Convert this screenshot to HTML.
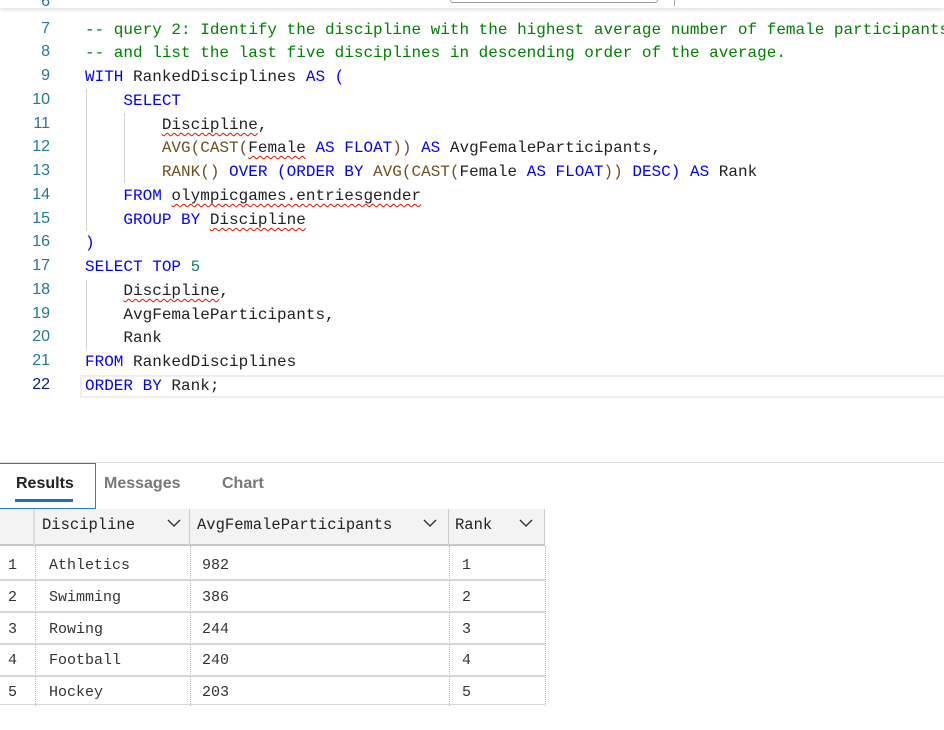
<!DOCTYPE html>
<html><head><meta charset="utf-8"><style>
*{margin:0;padding:0;box-sizing:border-box}
body{width:944px;height:730px;background:#fff;position:relative;overflow:hidden;font-family:"Liberation Mono",monospace}
.top{position:absolute;left:0;top:0;width:944px;height:8px;background:#fff;box-shadow:0 2px 4px rgba(0,0,0,.12)}
.ln{position:absolute;left:0;width:50px;text-align:right;font-size:16px;color:#237893;font-family:"Liberation Sans",sans-serif}
.cl{position:absolute;left:85px;font-size:16px;white-space:pre;color:#1f1f1f;line-height:20px}
.c{color:#008000}.k{color:#0000ff}.f{color:#6f4e1e}.n{color:#098658}
.sq{text-decoration:underline wavy #e51400;text-underline-offset:3px;text-decoration-thickness:1px}
.g{position:absolute;width:1px;background:#d4d4d4}
.tab{position:absolute;top:475px;font-family:"Liberation Sans",sans-serif;font-size:16px;font-weight:bold;color:#777}
.hdr{position:absolute;top:509px;height:37px;background:#f3f3f3;border-bottom:2px solid #c8c8c8;border-right:1px solid #ccc}
.ht{position:absolute;top:516px;font-size:15.5px;color:#222}
.chev{position:absolute;top:518px;width:16px;height:10px}
.cell{position:absolute;font-size:15px;color:#333}
.rl{position:absolute;left:0;width:545px;height:2px;background:#d6d6d6}
.vd{position:absolute;top:546px;height:160px;border-left:1px dotted #bbb}
</style></head><body>
<div class="top"></div>
<div style="position:absolute;left:450px;top:0;width:208px;height:3px;border:1px solid #999;border-top:none;border-radius:0 0 3px 3px"></div>
<div style="position:absolute;left:674px;top:0;width:1px;height:6px;background:#aaa"></div>
<div class="ln" style="top:-7px">6</div>
<div class="ln" style="top:20px">7</div>
<div class="ln" style="top:43px">8</div>
<div class="ln" style="top:67px">9</div>
<div class="ln" style="top:91px">10</div>
<div class="ln" style="top:115px">11</div>
<div class="ln" style="top:138px">12</div>
<div class="ln" style="top:162px">13</div>
<div class="ln" style="top:186px">14</div>
<div class="ln" style="top:210px">15</div>
<div class="ln" style="top:233px">16</div>
<div class="ln" style="top:257px">17</div>
<div class="ln" style="top:281px">18</div>
<div class="ln" style="top:305px">19</div>
<div class="ln" style="top:328px">20</div>
<div class="ln" style="top:352px">21</div>
<div class="ln" style="top:376px;color:#0b216f">22</div>
<div style="position:absolute;left:80px;top:375px;width:870px;height:23px;border:2px solid #eee"></div>
<div class="g" style="left:86px;top:89px;height:142px"></div>
<div class="g" style="left:124px;top:113px;height:70px"></div>
<div class="g" style="left:86px;top:280px;height:70px"></div>
<div class="cl" style="top:20px"><span class="c">-- query 2: Identify the discipline with the highest average number of female participants</span></div>
<div class="cl" style="top:43px"><span class="c">-- and list the last five disciplines in descending order of the average.</span></div>
<div class="cl" style="top:67px"><span class="k">WITH</span> RankedDisciplines <span class="k">AS (</span></div>
<div class="cl" style="top:91px">    <span class="k">SELECT</span></div>
<div class="cl" style="top:115px">        <span class="sq">Discipline</span>,</div>
<div class="cl" style="top:138px">        <span class="f">AVG(CAST(</span><span class="sq">Female</span> <span class="k">AS FLOAT</span><span class="f">))</span> <span class="k">AS</span> AvgFemaleParticipants,</div>
<div class="cl" style="top:162px">        <span class="f">RANK()</span> <span class="k">OVER</span> <span class="k">(ORDER BY</span> <span class="f">AVG(CAST(</span>Female <span class="k">AS FLOAT</span><span class="f">))</span> <span class="k">DESC)</span> <span class="k">AS</span> Rank</div>
<div class="cl" style="top:186px">    <span class="k">FROM</span> <span class="sq">olympicgames.entriesgender</span></div>
<div class="cl" style="top:210px">    <span class="k">GROUP BY</span> <span class="sq">Discipline</span></div>
<div class="cl" style="top:233px"><span class="k">)</span></div>
<div class="cl" style="top:257px"><span class="k">SELECT TOP</span> <span class="n">5</span></div>
<div class="cl" style="top:281px">    <span class="sq">Discipline</span>,</div>
<div class="cl" style="top:305px">    AvgFemaleParticipants,</div>
<div class="cl" style="top:328px">    Rank</div>
<div class="cl" style="top:352px"><span class="k">FROM</span> RankedDisciplines</div>
<div class="cl" style="top:376px"><span class="k">ORDER BY</span> Rank;</div>

<div style="position:absolute;left:0;top:462px;width:944px;height:1px;background:#ddd"></div>
<div style="position:absolute;left:-2px;top:463px;width:98px;height:46px;border:1px solid #2b7bd6"></div>
<div style="position:absolute;left:15px;top:499px;width:58px;height:3px;background:#1a6fc4"></div>
<div class="tab" style="left:16px;color:#222">Results</div>
<div class="tab" style="left:104px">Messages</div>
<div class="tab" style="left:222px">Chart</div>

<div class="hdr" style="left:0;width:35px;border-right:2px solid #ddd"></div>
<div class="hdr" style="left:35px;width:155px"></div>
<div class="hdr" style="left:190px;width:259px"></div>
<div class="hdr" style="left:449px;width:96px"></div>
<div class="ht" style="left:42px">Discipline</div>
<div class="ht" style="left:197px">AvgFemaleParticipants</div>
<div class="ht" style="left:455px">Rank</div>
<svg class="chev" style="left:166px" viewBox="0 0 16 10"><path d="M2 2l6 6 6-6" fill="none" stroke="#333" stroke-width="1.4"/></svg>
<svg class="chev" style="left:422px" viewBox="0 0 16 10"><path d="M2 2l6 6 6-6" fill="none" stroke="#333" stroke-width="1.4"/></svg>
<svg class="chev" style="left:518px" viewBox="0 0 16 10"><path d="M2 2l6 6 6-6" fill="none" stroke="#333" stroke-width="1.4"/></svg>

<div class="vd" style="left:35px"></div>
<div class="vd" style="left:190px"></div>
<div class="vd" style="left:449px"></div>
<div class="vd" style="left:545px"></div>
<div class="rl" style="top:579px"></div>
<div class="rl" style="top:611px"></div>
<div class="rl" style="top:643px"></div>
<div class="rl" style="top:675px"></div>
<div class="rl" style="top:704px;height:1px"></div>

<div class="cell" style="top:557px;left:8px">1</div><div class="cell" style="top:557px;left:49px">Athletics</div><div class="cell" style="top:557px;left:202px">982</div><div class="cell" style="top:557px;left:462px">1</div>
<div class="cell" style="top:589px;left:8px">2</div><div class="cell" style="top:589px;left:49px">Swimming</div><div class="cell" style="top:589px;left:202px">386</div><div class="cell" style="top:589px;left:462px">2</div>
<div class="cell" style="top:621px;left:8px">3</div><div class="cell" style="top:621px;left:49px">Rowing</div><div class="cell" style="top:621px;left:202px">244</div><div class="cell" style="top:621px;left:462px">3</div>
<div class="cell" style="top:652px;left:8px">4</div><div class="cell" style="top:652px;left:49px">Football</div><div class="cell" style="top:652px;left:202px">240</div><div class="cell" style="top:652px;left:462px">4</div>
<div class="cell" style="top:684px;left:8px">5</div><div class="cell" style="top:684px;left:49px">Hockey</div><div class="cell" style="top:684px;left:202px">203</div><div class="cell" style="top:684px;left:462px">5</div>
</body></html>
